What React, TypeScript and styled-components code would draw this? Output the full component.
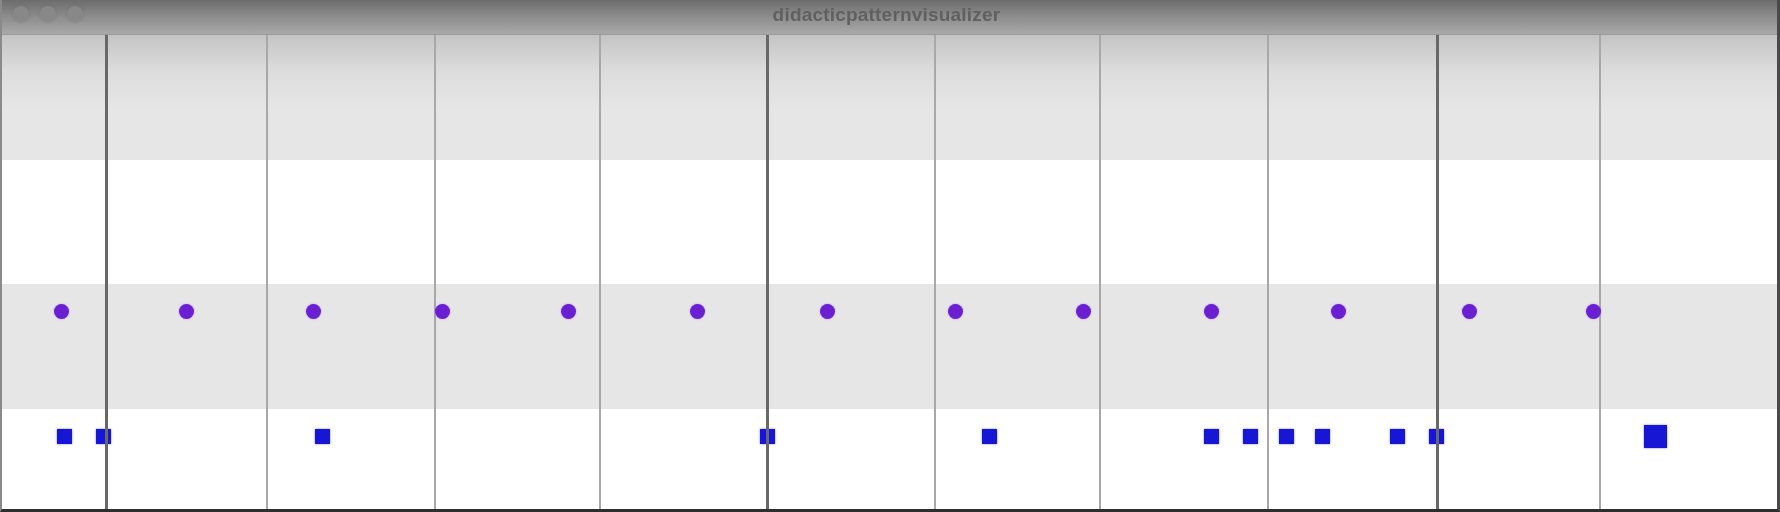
import React from "react";
import styled, { createGlobalStyle } from "styled-components";

const Global = createGlobalStyle`
  html, body { margin: 0; padding: 0; background: #ffffff; overflow: hidden; }
  #root { width: 1780px; height: 512px; }
`;

const Window = styled.div`
  width: 1780px;
  height: 512px;
  box-sizing: border-box;
  display: flex;
  flex-direction: column;
  border-left: 2px solid #8a8a8a;
  border-right: 3px solid #4a4a4a;
  border-bottom: 3px solid #2e2e2e;
  background: #ffffff;
  overflow: hidden;
`;

const TitleBar = styled.div`
  height: 34px;
  flex: none;
  position: relative;
  display: flex;
  align-items: center;
  justify-content: center;
  background: linear-gradient(#6c6c6c 0%, #8a8a8a 45%, #a9a9a9 100%);
  border-bottom: 1px solid #9a9a9a;
`;

const Lights = styled.div`
  position: absolute;
  left: 11px;
  top: 6px;
  display: flex;
  gap: 11px;
`;

const Light = styled.span`
  width: 16px;
  height: 16px;
  border-radius: 50%;
  background: #888888;
  box-shadow: 0 0 3px rgba(100, 100, 100, 0.45);
`;

const Title = styled.div`
  font-family: "Liberation Sans", Arial, sans-serif;
  font-size: 19px;
  font-weight: 700;
  color: #606060;
  letter-spacing: 0.2px;
  filter: blur(0.7px);
  margin-top: -4px;
  margin-left: -6px;
`;

const Canvas = styled.div`
  flex: 1;
  position: relative;
  overflow: hidden;
  display: flex;
  flex-direction: column;
`;

const Lane = styled.div<{ $shade: boolean; $top?: boolean }>`
  height: 124.5px;
  flex: none;
  position: relative;
  background: ${(p) =>
    p.$top
      ? "linear-gradient(#c4c4c4 0px, #dcdcdc 35px, #e6e6e6 75px)"
      : p.$shade
      ? "#e6e6e6"
      : "#ffffff"};
`;

const GridLine = styled.div<{ $bar: boolean }>`
  position: absolute;
  top: 0;
  bottom: 0;
  width: ${(p) => (p.$bar ? 3 : 2)}px;
  margin-left: ${(p) => (p.$bar ? -1.5 : -1)}px;
  background: ${(p) => (p.$bar ? "#686868" : "#a8a8a8")};
  z-index: 2;
`;

const Dot = styled.div`
  position: absolute;
  top: 20px;
  width: 15px;
  height: 15px;
  margin-left: -7.5px;
  border-radius: 50%;
  background: #6a1fd2;
  box-shadow: 0 0 2px rgba(150, 90, 240, 0.6);
  z-index: 3;
`;

const Block = styled.div<{ $size: number }>`
  position: absolute;
  top: ${(p) => 27.5 - p.$size / 2}px;
  width: ${(p) => p.$size}px;
  height: ${(p) => p.$size}px;
  margin-left: ${(p) => -p.$size / 2}px;
  background: #1616d4;
  box-shadow: 0 0 2px rgba(40, 40, 220, 0.6);
  z-index: 1;
`;

const lines: { x: number; bar: boolean }[] = [
  { x: 106.5, bar: true },
  { x: 267, bar: false },
  { x: 434.5, bar: false },
  { x: 600, bar: false },
  { x: 767, bar: true },
  { x: 935, bar: false },
  { x: 1100, bar: false },
  { x: 1267.5, bar: false },
  { x: 1437, bar: true },
  { x: 1600, bar: false },
];

const dots = [61.5, 186, 313, 442.5, 568.7, 697, 827.7, 955.7, 1083.3, 1211, 1338, 1469, 1593];

const blocks: { x: number; size: number }[] = [
  { x: 64.8, size: 15 },
  { x: 103.3, size: 15 },
  { x: 322.5, size: 15 },
  { x: 767, size: 15 },
  { x: 989, size: 15 },
  { x: 1211.7, size: 15 },
  { x: 1250, size: 15 },
  { x: 1286, size: 15 },
  { x: 1322.5, size: 15 },
  { x: 1397.5, size: 15 },
  { x: 1436, size: 15 },
  { x: 1655.5, size: 23 },
];

const GridLines = () => (
  <>
    {lines.map((l, i) => (
      <GridLine key={i} $bar={l.bar} style={{ left: l.x - 2 }} />
    ))}
  </>
);

export default function App() {
  return (
    <>
      <Global />
      <Window>
        <TitleBar>
          <Lights>
            <Light />
            <Light />
            <Light />
          </Lights>
          <Title>didacticpatternvisualizer</Title>
        </TitleBar>
        <Canvas>
          <Lane $shade $top>
            <GridLines />
          </Lane>
          <Lane $shade={false}>
            <GridLines />
          </Lane>
          <Lane $shade>
            <GridLines />
            {dots.map((x, i) => (
              <Dot key={i} style={{ left: x - 2 }} />
            ))}
          </Lane>
          <Lane $shade={false}>
            <GridLines />
            {blocks.map((b, i) => (
              <Block key={i} $size={b.size} style={{ left: b.x - 2 }} />
            ))}
          </Lane>
        </Canvas>
      </Window>
    </>
  );
}
